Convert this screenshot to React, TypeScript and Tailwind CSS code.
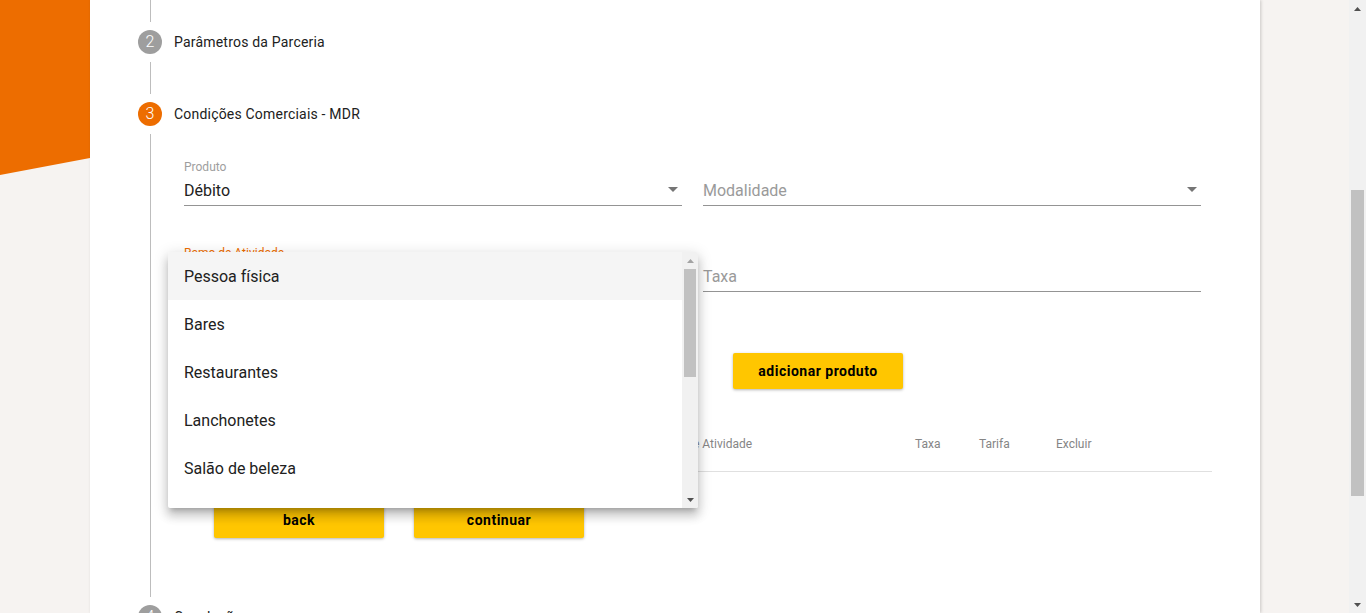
import { ReactNode } from 'react';

const Arrow = ({ up, color }: { up?: boolean; color: string }) => (
  <svg width="7" height="4" viewBox="0 0 7 4">
    <polygon points={up ? '0,4 3.5,0 7,4' : '0,0 7,0 3.5,4'} fill={color} />
  </svg>
);

const DropIcon = () => (
  <svg width="10" height="5" viewBox="0 0 10 5" className="absolute right-[4px] top-[13px]">
    <polygon points="0,0 10,0 5,5" fill="#757575" />
  </svg>
);

const StepRow = ({ n, label, active }: { n: number; label: string; active?: boolean }) => (
  <div className="mt-2 flex h-6 items-center">
    <div
      className={`flex h-6 w-6 items-center justify-center rounded-full text-[16px] font-light leading-none text-white ${
        active ? 'bg-[#ed6d00]' : 'bg-[#9e9e9e]'
      }`}
    >
      {n}
    </div>
    <span className="ml-3 text-[14px] tracking-[0.2px] text-[#212121]">{label}</span>
  </div>
);

const Field = ({
  label,
  value,
  placeholder,
  select,
  focused,
}: {
  label?: string;
  value?: string;
  placeholder?: string;
  select?: boolean;
  focused?: boolean;
}) => (
  <div className="w-[498px]">
    <div className={`h-[14px] text-[12px] leading-[15px] ${focused ? 'text-[#ed6d00]' : 'text-[#9e9e9e]'}`}>
      {label}
    </div>
    <div className="relative h-[32px] border-b border-[#949494] pt-[7px] text-[16px] leading-[19px]">
      {value && <span className="text-[#212121]">{value}</span>}
      {placeholder && <span className="text-[#9a9a9a]">{placeholder}</span>}
      {select && <DropIcon />}
    </div>
  </div>
);

const YellowButton = ({ children }: { children: ReactNode }) => (
  <button className="flex h-9 w-[170px] items-center justify-center rounded-[2px] bg-[#ffc600] text-[14px] font-bold tracking-[0.5px] text-black shadow-[0_1px_3px_rgba(0,0,0,0.3)]">
    {children}
  </button>
);

const options = ['Pessoa física', 'Bares', 'Restaurantes', 'Lanchonetes', 'Salão de beleza'];

export default function App() {
  return (
    <div className="relative flex h-[613px] w-[1366px] overflow-hidden bg-[#f6f3f1] font-['Roboto',sans-serif]">
      {/* orange band behind card */}
      <div className="w-[90px] shrink-0">
        <svg width="90" height="176" viewBox="0 0 90 176">
          <polygon points="0,0 90,0 90,158 0,175" fill="#ed6d00" />
        </svg>
      </div>

      {/* card */}
      <div className="w-[1170px] shrink-0 bg-white pl-[48px] shadow-[1px_0_3px_rgba(0,0,0,0.18)]">
        <div className="ml-[12px] h-[22px] w-px bg-[#bdbdbd]" />
        <StepRow n={2} label="Parâmetros da Parceria" />
        <div className="ml-[12px] mt-2 h-[32px] w-px bg-[#bdbdbd]" />
        <StepRow n={3} label="Condições Comerciais - MDR" active />

        <div className="ml-[12px] mt-2 h-[463px] border-l border-[#bdbdbd] pl-[33px] pt-[26px]">
          <div className="flex gap-[21px]">
            <Field label="Produto" value="Débito" select />
            <Field placeholder="Modalidade" select />
          </div>
          <div className="mt-[40px] flex gap-[21px]">
            <Field label="Ramo de Atividade" select focused />
            <Field placeholder="Taxa" />
          </div>

          <div className="ml-[549px] mt-[61px]">
            <YellowButton>adicionar produto</YellowButton>
          </div>

          <div className="mt-[27px] flex h-[56px] w-[1028px] items-center border-b border-[#e0e0e0] text-[12px] text-[#858585]">
            <div className="w-[236px] pl-4">Produto</div>
            <div className="w-[232px]">Modalidade</div>
            <div className="w-[263px]">Ramo de Atividade</div>
            <div className="w-[64px]">Taxa</div>
            <div className="w-[77px]">Tarifa</div>
            <div>Excluir</div>
          </div>

          <div className="ml-[30px] mt-[30px] flex gap-[30px]">
            <YellowButton>back</YellowButton>
            <YellowButton>continuar</YellowButton>
          </div>
        </div>

        <StepRow n={4} label="Conclusão" />
      </div>

      <div className="flex-1" />

      {/* page scrollbar */}
      <div className="flex w-[17px] shrink-0 flex-col bg-[#f1f1f1]">
        <div className="flex h-[17px] items-center justify-center">
          <Arrow up color="#505050" />
        </div>
        <div className="mx-[2px] mt-[173px] h-[306px] bg-[#c1c1c1]" />
        <div className="flex-1" />
        <div className="flex h-[17px] items-center justify-center">
          <Arrow color="#505050" />
        </div>
      </div>

      {/* open select menu */}
      <div className="absolute left-[168px] top-[252px] flex h-[256px] w-[530px] overflow-hidden rounded-[2px] bg-white shadow-[0_5px_5px_-3px_rgba(0,0,0,0.2),0_8px_10px_1px_rgba(0,0,0,0.14),0_3px_14px_2px_rgba(0,0,0,0.12)]">
        <div className="flex-1">
          {options.map((o, i) => (
            <div
              key={o}
              className={`flex h-12 items-center pl-4 pt-px text-[16px] text-[#212121] ${i === 0 ? 'bg-[#f5f5f5]' : ''}`}
            >
              {o}
            </div>
          ))}
        </div>
        <div className="flex w-4 flex-col bg-[#f1f1f1]">
          <div className="flex h-[17px] items-center justify-center">
            <Arrow up color="#a3a3a3" />
          </div>
          <div className="mx-[2px] h-[108px] bg-[#c1c1c1]" />
          <div className="flex-1" />
          <div className="flex h-[17px] items-center justify-center">
            <Arrow color="#505050" />
          </div>
        </div>
      </div>
    </div>
  );
}
